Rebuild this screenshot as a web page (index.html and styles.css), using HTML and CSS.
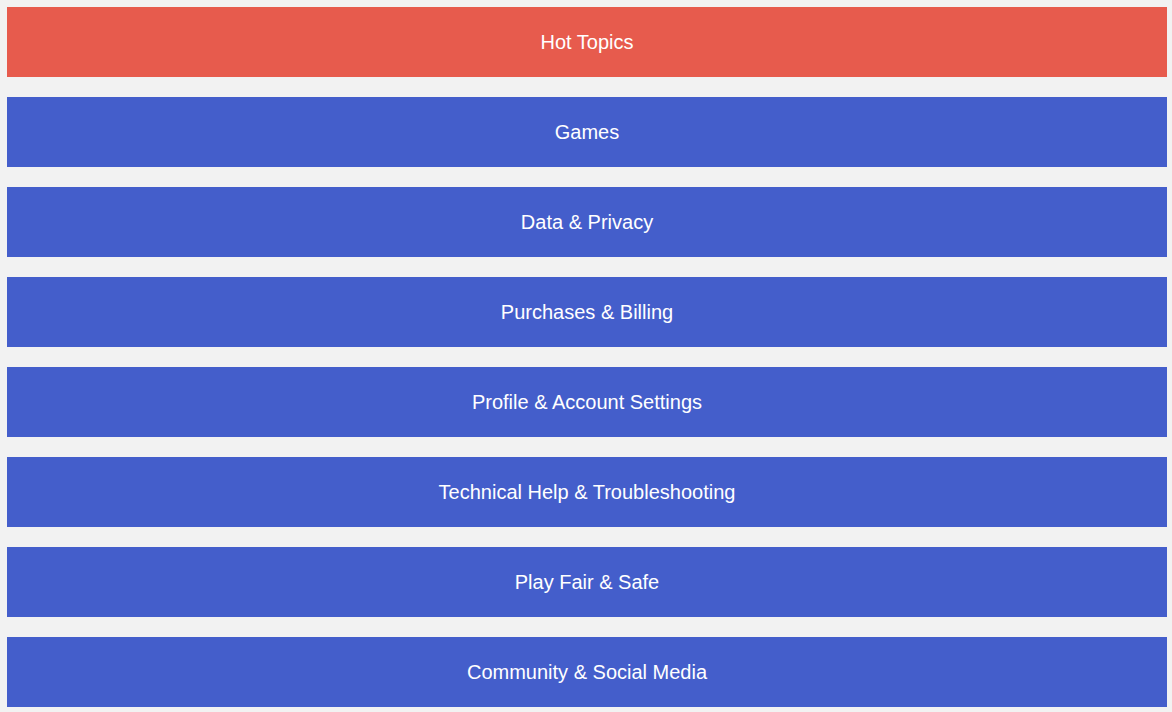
FILE: index.html
```html
<!DOCTYPE html>
<html>
<head>
<meta charset="utf-8">
<link rel="stylesheet" href="styles.css">
</head>
<body>
<nav class="topics">
  <a class="topic topic-hot" href="#">Hot Topics</a>
  <a class="topic" href="#">Games</a>
  <a class="topic" href="#">Data &amp; Privacy</a>
  <a class="topic" href="#">Purchases &amp; Billing</a>
  <a class="topic" href="#">Profile &amp; Account Settings</a>
  <a class="topic" href="#">Technical Help &amp; Troubleshooting</a>
  <a class="topic" href="#">Play Fair &amp; Safe</a>
  <a class="topic" href="#">Community &amp; Social Media</a>
</nav>
</body>
</html>
```
FILE: styles.css
```css
html, body {
  background: #f2f2f2;
}
body {
  margin: 7px 5px 5px 7px;
  font-family: "Liberation Sans", Arial, sans-serif;
}
.topics {
  display: flex;
  flex-direction: column;
  gap: 20px;
}
.topic {
  display: flex;
  align-items: center;
  justify-content: center;
  height: 70px;
  background: #445ecb;
  color: #ffffff;
  font-size: 20px;
  text-decoration: none;
}
.topic-hot {
  background: #e75b4d;
}
```
